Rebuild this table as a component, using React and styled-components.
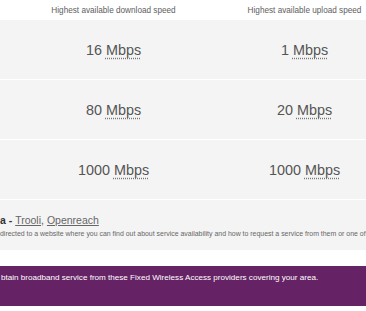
import React from 'react';
import styled, { createGlobalStyle } from 'styled-components';

const GlobalStyle = createGlobalStyle`
  html, body {
    margin: 0;
    padding: 0;
    background: #ffffff;
    overflow: hidden;
  }
  body {
    font-family: "Liberation Sans", Arial, sans-serif;
  }
`;

const speeds = [
  { down: 16, up: 1 },
  { down: 80, up: 20 },
  { down: 1000, up: 1000 },
];

const Page = styled.div`
  width: 700px;
  display: flex;
  flex-direction: column;
`;

const SpeedTable = styled.div`
  display: flex;
  flex-direction: column;
`;

const Row = styled.div`
  display: grid;
  grid-template-columns: 18px 191px 191px;
  align-items: center;
  height: ${p => (p.$head ? '20px' : '59px')};
  background: ${p => (p.$head ? '#ffffff' : '#f4f4f4')};
  border-bottom: ${p => (p.$head ? '0' : '1px solid #ffffff')};
`;

const HeadCell = styled.div`
  text-align: center;
  font-size: 8.2px;
  color: #5e5e5e;
`;

const SpeedCell = styled.div`
  text-align: center;
  font-size: 14.4px;
  color: #555555;
  padding-top: 1px;
`;

const Unit = styled.abbr`
  text-decoration: underline dotted #777777;
  text-underline-offset: 3px;
`;

const Providers = styled.div`
  background: #f4f4f4;
  height: 50px;
  padding-top: 13px;
  box-sizing: border-box;
  display: flex;
  flex-direction: column;
  gap: 3px;
`;

const ProviderTitle = styled.div`
  font-size: 10.5px;
  line-height: 14px;
  color: #555555;

  b {
    color: #333333;
  }
  a {
    color: #666666;
    text-decoration: underline;
  }
`;

const ProviderNote = styled.div`
  font-size: 6.95px;
  line-height: 8px;
  color: #666666;
  white-space: nowrap;
`;

const Banner = styled.div`
  margin-top: 16px;
  height: 40px;
  background: #652366;
  color: #ffffff;
  font-size: 8.1px;
  padding: 7px 0 0 1px;
  box-sizing: border-box;
  white-space: nowrap;
`;

export default function App() {
  return (
    <>
      <GlobalStyle />
      <Page>
        <SpeedTable>
          <Row $head>
            <span />
            <HeadCell>Highest available download speed</HeadCell>
            <HeadCell>Highest available upload speed</HeadCell>
          </Row>
          {speeds.map((s, i) => (
            <Row key={i}>
              <span />
              <SpeedCell>
                {s.down} <Unit title="Megabits per second">Mbps</Unit>
              </SpeedCell>
              <SpeedCell>
                {s.up} <Unit title="Megabits per second">Mbps</Unit>
              </SpeedCell>
            </Row>
          ))}
        </SpeedTable>

        <Providers>
          <ProviderTitle>
            <b>a - </b>
            <a href="#trooli">Trooli</a>, <a href="#openreach">Openreach</a>
          </ProviderTitle>
          <ProviderNote>
            directed to a website where you can find out about service availability and how to request a service from them or one of their retail partners.
          </ProviderNote>
        </Providers>

        <Banner>
          btain broadband service from these Fixed Wireless Access providers covering your area.
        </Banner>
      </Page>
    </>
  );
}
